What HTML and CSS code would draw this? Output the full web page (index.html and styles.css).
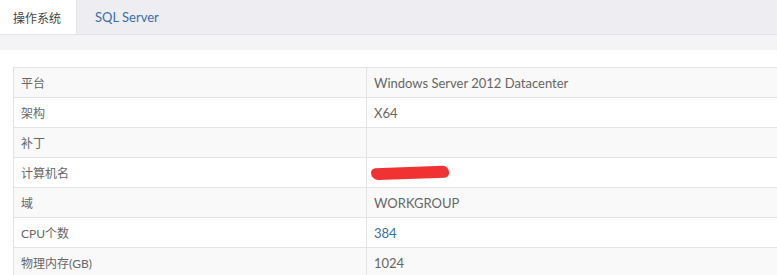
FILE: index.html
```html
<!DOCTYPE html>
<html lang="zh-CN">
<head>
    <meta charset="UTF-8">
    <title>服务器信息</title>
    <link rel="stylesheet" href="styles.css">
</head>
<body>
    <ul class="tabs">
        <li class="tab active">操作系统</li>
        <li class="tab">SQL Server</li>
    </ul>
    <div class="tab-gap"></div>

    <div class="panel">
        <table class="info-table">
            <tr><td class="label">平台</td><td>Windows Server 2012 Datacenter</td></tr>
            <tr><td class="label">架构</td><td>X64</td></tr>
            <tr><td class="label">补丁</td><td></td></tr>
            <tr><td class="label">计算机名</td><td><span class="redacted"></span></td></tr>
            <tr><td class="label">域</td><td>WORKGROUP</td></tr>
            <tr><td class="label">CPU个数</td><td><a class="link" href="#">384</a></td></tr>
            <tr><td class="label">物理内存(GB)</td><td>1024</td></tr>
        </table>
    </div>
</body>
</html>
```

FILE: styles.css
```css
body {
    margin: 0;
    padding: 0;
    background-color: #fff;
    font-family: Lato, "Noto Sans CJK SC", sans-serif;
    font-size: 13px;
    color: #666;
    overflow: hidden;
}

.tabs {
    display: flex;
    margin: 0;
    padding: 0;
    list-style: none;
    height: 34px;
    background-color: #eeedf2;
    border-bottom: 1px solid #e4e3e9;
}

.tab {
    display: flex;
    align-items: center;
    padding: 0 15px 0 18px;
    white-space: nowrap;
    color: #3a6ea5;
}

.tab.active {
    padding: 0 15px 0 13px;
    font-size: 12px;
    background-color: #fff;
    color: #444;
    border-right: 1px solid #e4e3e9;
}

.tab-gap {
    height: 15px;
    background-color: #f4f4f7;
}

.panel {
    padding: 17px 0 0 13px;
}

.info-table {
    width: 1000px;
    border-collapse: collapse;
}

.info-table td {
    height: 29px;
    padding: 0 7px;
    border: 1px solid #e3e3e3;
    vertical-align: middle;
}

.info-table tr:nth-child(odd) td {
    background-color: #f9f9f9;
}

.info-table .label {
    width: 338px;
    font-size: 12px;
}

.link {
    color: #3a6ea5;
    text-decoration: none;
}

.redacted {
    display: inline-block;
    width: 78px;
    height: 12px;
    margin: 0 0 2px -3px;
    background-color: #f03232;
    border-radius: 6px 8px 6px 10px;
    transform: rotate(-2deg);
    vertical-align: middle;
}
```
